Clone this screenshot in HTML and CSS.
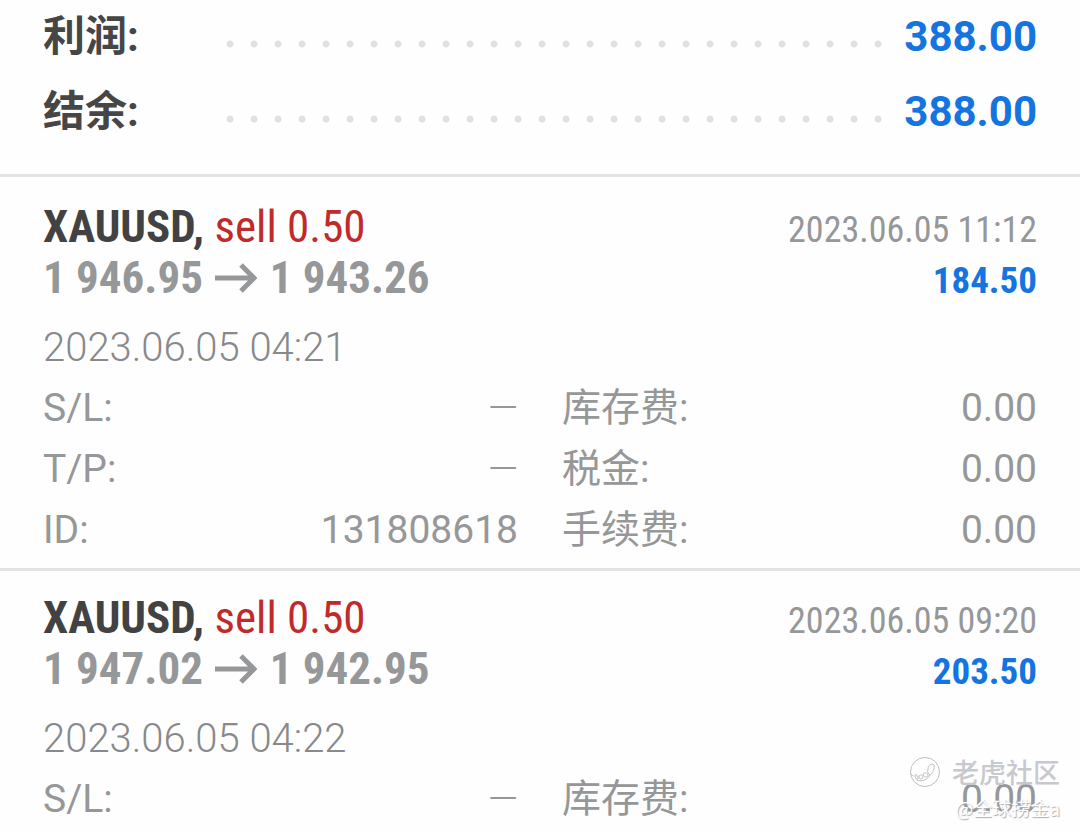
FILE: index.html
```
<!DOCTYPE html>
<html lang="zh-CN">
<head>
<meta charset="utf-8">
<title>XAUUSD</title>
<link rel="stylesheet" href="styles.css">
</head>
<body>
<main class="page">
  <dl class="summary">
    <div class="total"><dt>利润:</dt><span class="dots"></span><dd>388.00</dd></div>
    <div class="total"><dt>结余:</dt><span class="dots"></span><dd>388.00</dd></div>
  </dl>
  <section class="deals">
    <article class="deal">
      <div class="line">
        <h2 class="title">XAUUSD, <span class="side">sell 0.50</span></h2>
        <time class="closed">2023.06.05 11:12</time>
      </div>
      <div class="line">
        <p class="prices">1 946.95 <svg class="arrow" viewBox="0 0 42 30" aria-label="到"><path d="M0 15H39M26 2L39 15L26 28"/></svg> 1 943.26</p>
        <strong class="profit">184.50</strong>
      </div>
      <time class="opened">2023.06.05 04:21</time>
      <dl class="details">
        <div class="row"><dt>S/L:</dt><dd class="dash">—</dd></div>
        <div class="row"><dt>库存费:</dt><dd>0.00</dd></div>
        <div class="row"><dt>T/P:</dt><dd class="dash">—</dd></div>
        <div class="row"><dt>税金:</dt><dd>0.00</dd></div>
        <div class="row"><dt>ID:</dt><dd>131808618</dd></div>
        <div class="row"><dt>手续费:</dt><dd>0.00</dd></div>
      </dl>
    </article>
    <article class="deal">
      <div class="line">
        <h2 class="title">XAUUSD, <span class="side">sell 0.50</span></h2>
        <time class="closed">2023.06.05 09:20</time>
      </div>
      <div class="line">
        <p class="prices">1 947.02 <svg class="arrow" viewBox="0 0 42 30" aria-label="到"><path d="M0 15H39M26 2L39 15L26 28"/></svg> 1 942.95</p>
        <strong class="profit">203.50</strong>
      </div>
      <time class="opened">2023.06.05 04:22</time>
      <dl class="details">
        <div class="row"><dt>S/L:</dt><dd class="dash">—</dd></div>
        <div class="row"><dt>库存费:</dt><dd>0.00</dd></div>
      </dl>
    </article>
  </section>
  <aside class="watermark">
    <div class="brand">
      <svg class="tiger" viewBox="0 0 32 32"><circle cx="16" cy="16" r="14.500"/><path d="M2 18l2 2M6 19c2-1 3 1 3 4c-2 1-3-1-3-4M10 20c2-2 4-1 4 2c-2 2-4 1-4-2M14 18c2-2 5-1 5 2c-2 2-4 1-5-2M19 13c0-4 4-6 6-4c1 3-1 8-4 10c-2-1-3-3-2-6M8 24c5 2 10 0 13-5"/></svg>
      <span>老虎社区</span>
    </div>
    <span class="author">@全球捞金a</span>
  </aside>
</main>
</body>
</html>
```
FILE: styles.css
```
* {
  box-sizing: border-box;
  margin: 0;
  padding: 0;
}

body {
  background: #fefefe;
  color: #969798;
  font-family: Roboto, "Noto Sans CJK SC", sans-serif;
  font-weight: 400;
}

.page {
  position: relative;
  min-height: 100vh;
  overflow: hidden;
}

.summary {
  padding: 0 43px 24px;
}

.total {
  display: grid;
  grid-template-columns: 175px 1fr auto;
  align-items: baseline;
  height: 75px;
  line-height: 74px;
  font-size: 42px;
  font-weight: 700;
}

.total dt {
  color: #464646;
}

.total dd {
  color: #1474e0;
}

.dots {
  align-self: center;
  height: 24px;
  margin-top: 12px;
  margin-right: 15px;
  background: radial-gradient(circle, #e1e1e1 3px, transparent 4px) 0 0 / 24px 24px;
}

.deals {
  border-top: 3px solid #e3e3e3;
  padding-top: 3px;
}

.deal {
  padding: 21px 43px 7px;
}

.deal + .deal {
  border-top: 3px solid #e3e3e3;
}

.line {
  display: flex;
  align-items: baseline;
  justify-content: space-between;
  height: 51px;
  line-height: 51px;
  font-family: "Roboto Condensed", Roboto, sans-serif;
}

.title {
  color: #424242;
  font-size: 45px;
  font-weight: 700;
}

.side {
  color: #c12a2a;
  font-weight: 400;
}

.closed {
  font-size: 36px;
}

.prices {
  font-size: 45px;
  font-weight: 700;
}

.profit {
  color: #1474e0;
  font-size: 37px;
}

.arrow {
  width: 42px;
  height: 30px;
  margin: 0 2px;
  fill: none;
  stroke: currentColor;
  stroke-width: 5;
}

.opened {
  display: block;
  padding-top: 14px;
  color: #88898a;
  line-height: 61px;
  font-size: 40px;
  font-weight: 300;
}

.details {
  display: grid;
  grid-template-columns: 1fr 1fr;
  column-gap: 44px;
  font-size: 39px;
}

.row {
  display: flex;
  justify-content: space-between;
  height: 61px;
  line-height: 61px;
}

.dash {
  font-weight: 300;
}

.watermark {
  position: absolute;
  right: 20px;
  bottom: 15px;
  display: flex;
  flex-direction: column;
  align-items: flex-end;
  color: #fff;
  font-family: "Noto Sans CJK SC", sans-serif;
  text-shadow: 1px 1px 1px #aaabb0;
}

.brand {
  display: flex;
  align-items: center;
  gap: 11px;
  color: #c8c9ce;
  font-size: 27px;
  font-weight: 500;
  line-height: 44px;
  text-shadow: none;
}

.tiger {
  width: 32px;
  height: 32px;
  fill: none;
  stroke: #bfc0c4;
  stroke-width: 1;
}

.author {
  font-size: 19px;
  line-height: 28px;
}
```
